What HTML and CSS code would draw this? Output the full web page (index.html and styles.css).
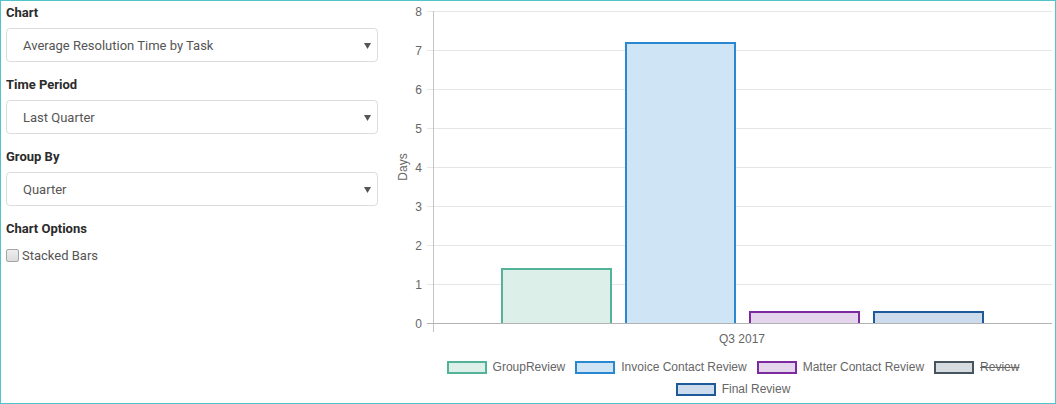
FILE: index.html
```html
<!DOCTYPE html>
<html>
<head>
<meta charset="utf-8">
<link rel="stylesheet" href="styles.css">
</head>
<body>
<div class="frame">
  <div class="controls">
    <div class="field">
      <div class="label">Chart</div>
      <div class="select"><span>Average Resolution Time by Task</span><svg class="caret" width="7" height="6" viewBox="0 0 7 6"><path d="M0 0H7L3.5 6Z"/></svg></div>
    </div>
    <div class="field">
      <div class="label">Time Period</div>
      <div class="select"><span>Last Quarter</span><svg class="caret" width="7" height="6" viewBox="0 0 7 6"><path d="M0 0H7L3.5 6Z"/></svg></div>
    </div>
    <div class="field">
      <div class="label">Group By</div>
      <div class="select"><span>Quarter</span><svg class="caret" width="7" height="6" viewBox="0 0 7 6"><path d="M0 0H7L3.5 6Z"/></svg></div>
    </div>
    <div class="field">
      <div class="label">Chart Options</div>
      <label class="check"><span class="box"></span><span>Stacked Bars</span></label>
    </div>
  </div>
  <div class="chart">
    <svg class="plot" width="665" height="350" viewBox="0 0 665 350">
      <g class="grid">
        <line x1="37" y1="10.5" x2="662" y2="10.5"/>
        <line x1="37" y1="49.5" x2="662" y2="49.5"/>
        <line x1="37" y1="88.5" x2="662" y2="88.5"/>
        <line x1="37" y1="127.5" x2="662" y2="127.5"/>
        <line x1="37" y1="166.5" x2="662" y2="166.5"/>
        <line x1="37" y1="205.5" x2="662" y2="205.5"/>
        <line x1="37" y1="244.5" x2="662" y2="244.5"/>
        <line x1="37" y1="283.5" x2="662" y2="283.5"/>
      </g>
      <line class="yaxis" x1="43.5" y1="10" x2="43.5" y2="331"/>
      <g class="ticks">
        <text x="32" y="10.5" dy="0.35em">8</text>
        <text x="32" y="49.5" dy="0.35em">7</text>
        <text x="32" y="88.5" dy="0.35em">6</text>
        <text x="32" y="127.5" dy="0.35em">5</text>
        <text x="32" y="166.5" dy="0.35em">4</text>
        <text x="32" y="205.5" dy="0.35em">3</text>
        <text x="32" y="244.5" dy="0.35em">2</text>
        <text x="32" y="283.5" dy="0.35em">1</text>
        <text x="32" y="322.5" dy="0.35em">0</text>
      </g>
      <text class="axis-title" transform="translate(13 166) rotate(-90)" dy="0.35em">Days</text>
      <g class="bar b-group">
        <rect x="111" y="267" width="111" height="55"/>
        <path d="M112 322V268H221V322"/>
      </g>
      <g class="bar b-invoice">
        <rect x="235" y="41" width="111" height="281"/>
        <path d="M236 322V42H345V322"/>
      </g>
      <g class="bar b-matter">
        <rect x="359" y="310" width="111" height="12"/>
        <path d="M360 322V311H469V322"/>
      </g>
      <g class="bar b-final">
        <rect x="483" y="310" width="111" height="12"/>
        <path d="M484 322V311H593V322"/>
      </g>
      <line class="zero" x1="37" y1="322.5" x2="662" y2="322.5"/>
      <text class="cat" x="352" y="338" dy="0.35em">Q3 2017</text>
    </svg>
    <div class="legend">
      <div class="item"><span class="swatch s-group"></span><span>GroupReview</span></div>
      <div class="item"><span class="swatch s-invoice"></span><span>Invoice Contact Review</span></div>
      <div class="item"><span class="swatch s-matter"></span><span>Matter Contact Review</span></div>
      <div class="item hidden"><span class="swatch s-review"></span><span class="struck">Review</span></div>
      <div class="item"><span class="swatch s-final"></span><span>Final Review</span></div>
    </div>
  </div>
</div>
</body>
</html>
```

FILE: styles.css
```css
html, body {
  margin: 0;
  padding: 0;
  background: #fff;
}

.frame {
  width: 1056px;
  height: 404px;
  box-sizing: border-box;
  border: 1px solid #52c3c9;
  display: flex;
  overflow: hidden;
}

.controls {
  width: 389px;
  flex: none;
  box-sizing: border-box;
  padding: 3px 0 0 5px;
  font-family: Roboto, "Liberation Sans", sans-serif;
  font-size: 13px;
}

.field {
  margin-bottom: 14px;
}

.label {
  height: 18px;
  line-height: 18px;
  font-weight: 700;
  color: #2b2b2b;
  margin-bottom: 6px;
}

.select {
  width: 372px;
  height: 34px;
  box-sizing: border-box;
  border: 1px solid #dcdcdc;
  border-radius: 4px;
  display: flex;
  align-items: center;
  padding: 0 6px 0 16px;
  color: #555;
  background: #fff;
}

.select span {
  flex: 1;
}

.caret {
  fill: #555;
  margin-top: 1px;
}

.check {
  display: flex;
  align-items: center;
  gap: 3px;
  height: 18px;
  margin-top: 8px;
  color: #555;
}

.box {
  width: 13px;
  height: 13px;
  box-sizing: border-box;
  border: 1px solid #a3a3a3;
  border-radius: 2px;
  background: linear-gradient(#ededed, #dcdcdc);
}

.chart {
  flex: 1;
  display: flex;
  flex-direction: column;
  font-family: "Liberation Sans", Arial, sans-serif;
  font-size: 12px;
  color: #666;
}

.plot {
  display: block;
}

.grid line {
  stroke: #e6e6e6;
  stroke-width: 1;
}

.yaxis {
  stroke: #c4c4c4;
  stroke-width: 1;
}

.zero {
  stroke: #b3b3b3;
  stroke-width: 1;
}

.ticks text {
  font-family: "Liberation Sans", Arial, sans-serif;
  font-size: 12px;
  fill: #666;
  text-anchor: end;
}

.axis-title,
.cat {
  font-family: "Liberation Sans", Arial, sans-serif;
  font-size: 12px;
  fill: #666;
  text-anchor: middle;
}

.bar path {
  fill: none;
  stroke-width: 2;
}

.b-group rect { fill: #ddefe9; }
.b-group path { stroke: #52b398; }
.b-invoice rect { fill: #cfe4f5; }
.b-invoice path { stroke: #2a88d0; }
.b-matter rect { fill: #e5d5ec; }
.b-matter path { stroke: #7b2a9f; }
.b-final rect { fill: #ccdcec; }
.b-final path { stroke: #1e5a9a; }

.legend {
  margin-top: 10px;
  padding-left: 21px;
  display: flex;
  flex-wrap: wrap;
  justify-content: center;
  column-gap: 10px;
  row-gap: 9px;
}

.item {
  display: flex;
  align-items: center;
  gap: 6px;
  height: 13px;
  line-height: 13px;
}

.swatch {
  width: 40px;
  height: 13px;
  box-sizing: border-box;
  border: 2px solid;
}

.s-group { background: #ddefe9; border-color: #52b398; }
.s-invoice { background: #cfe4f5; border-color: #2a88d0; }
.s-matter { background: #e5d5ec; border-color: #7b2a9f; }
.s-review { background: #d6dbe0; border-color: #46545f; }
.s-final { background: #ccdcec; border-color: #1e5a9a; }

.struck {
  text-decoration: line-through;
}
```
